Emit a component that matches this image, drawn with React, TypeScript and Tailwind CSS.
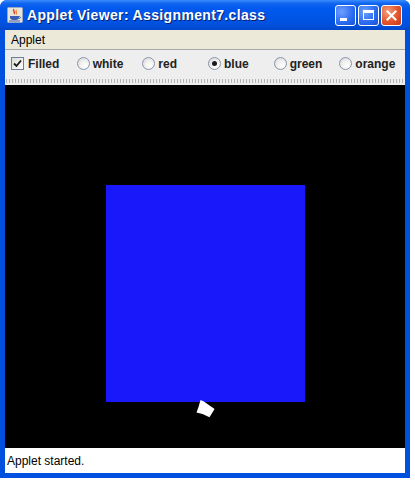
import React from "react";

function JavaIcon() {
  return (
    <svg width="16" height="16" viewBox="0 0 16 16">
      <rect x="0.5" y="0.5" width="15" height="15" rx="1" fill="#e8e4dc" stroke="#9aa7c0" />
      <path d="M7 2 C5 4 9 5 7 7" stroke="#e0401a" strokeWidth="1.4" fill="none" />
      <path d="M9.5 3 C8 4.5 10.5 5.5 9 7.5" stroke="#f08020" strokeWidth="1.2" fill="none" />
      <path d="M3 9 H12 V10.5 C12 12.5 10 13 7.5 13 C5 13 3 12.5 3 10.5 Z" fill="#3a5fb0" />
      <path d="M12 9.5 C14 9.5 14 11.5 12 11.5" stroke="#3a5fb0" strokeWidth="1" fill="none" />
      <rect x="2" y="13.5" width="11" height="1" fill="#3a5fb0" />
    </svg>
  );
}

function Radio({ checked }: { checked?: boolean }) {
  return (
    <span className="relative inline-flex h-[13px] w-[13px] items-center justify-center rounded-full border border-[#8a96ac] bg-[radial-gradient(circle_at_65%_70%,#ffffff_0%,#f0f0ee_45%,#cfd3da_100%)]">
      {checked && <span className="h-[5px] w-[5px] rounded-full bg-[#1a1a1a]" />}
    </span>
  );
}

function Option({ label, checked }: { label: string; checked?: boolean }) {
  return (
    <div className="flex w-[66px] items-center gap-[3px]">
      <Radio checked={checked} />
      <span className="text-[12px] font-bold text-[#222]">{label}</span>
    </div>
  );
}

export default function App() {
  return (
    <div
      className="h-[487px] w-[415px] bg-white"
      style={{ fontFamily: '"Liberation Sans", Arial, sans-serif' }}
    >
      <div className="flex h-[478px] w-[410px] flex-col overflow-hidden rounded-t-[7px] bg-[#0050df]">
        {/* Title bar */}
        <div className="flex h-[30px] shrink-0 items-center bg-[linear-gradient(to_bottom,#3b8dff_0%,#1064ee_12%,#0058ee_30%,#0055e6_60%,#0050dc_85%,#0046c8_100%)] pl-[7px] pr-[8px]">
          <JavaIcon />
          <span className="ml-[4px] text-[14px] font-bold tracking-[0.35px] text-white [text-shadow:1px_1px_0_#0a1f6a]">
            Applet Viewer: Assignment7.class
          </span>
          <div className="ml-auto flex gap-[2px]">
            <div className="flex h-[21px] w-[21px] items-end rounded-[3px] border border-white bg-[radial-gradient(circle_at_30%_30%,#6fa0ff_0%,#2a6bf0_60%,#1a50d8_100%)] pb-[4px] pl-[4px]">
              <div className="h-[3px] w-[7px] bg-white" />
            </div>
            <div className="flex h-[21px] w-[21px] items-center justify-center rounded-[3px] border border-white bg-[radial-gradient(circle_at_30%_30%,#6fa0ff_0%,#2a6bf0_60%,#1a50d8_100%)]">
              <div className="h-[10px] w-[11px] border border-t-[3px] border-white" />
            </div>
            <div className="flex h-[21px] w-[21px] items-center justify-center rounded-[3px] border border-white bg-[radial-gradient(circle_at_30%_30%,#f3a07e_0%,#e2552c_55%,#c6381a_100%)]">
              <svg width="11" height="11" viewBox="0 0 11 11">
                <path d="M1.5 1.5 L9.5 9.5 M9.5 1.5 L1.5 9.5" stroke="white" strokeWidth="2" strokeLinecap="square" />
              </svg>
            </div>
          </div>
        </div>

        {/* Body */}
        <div className="flex flex-1 flex-col px-[5px] pb-[5px]">
          {/* Menu bar */}
          <div className="flex h-[20px] shrink-0 items-center border-b border-[#a9a9a9] bg-[#ece9d8] pl-[6px] text-[12px] text-black">
            Applet
          </div>
          {/* Toolbar */}
          <div className="flex h-[27px] shrink-0 items-center bg-[#eeeeee] pl-[6px]">
            <div className="flex w-[66px] items-center gap-[4px]">
              <span className="flex h-[13px] w-[13px] items-center justify-center border border-[#6e7f98] bg-[linear-gradient(135deg,#dcdcd6,#ffffff)]">
                <svg width="9" height="9" viewBox="0 0 9 9">
                  <path d="M1 4.5 L3.5 7 L8 1.5" stroke="#1a1a1a" strokeWidth="1.8" fill="none" />
                </svg>
              </span>
              <span className="text-[12px] font-bold text-[#222]">Filled</span>
            </div>
            <Option label="white" />
            <Option label="red" />
            <Option label="blue" checked />
            <Option label="green" />
            <Option label="orange" />
          </div>
          {/* Dotted separator */}
          <div className="flex h-[8px] shrink-0 items-center bg-[#eeeeee]">
            <div className="h-[4px] w-full bg-[radial-gradient(circle,#b4b4b4_0.5px,transparent_0.8px)] bg-[length:3px_2px]" />
          </div>
          {/* Canvas */}
          <div className="h-[363px] shrink-0 bg-black">
            <svg width="400" height="363" viewBox="0 0 400 363">
              <rect x="101" y="100" width="199" height="217" fill="#1818fb" />
              <polygon
                points="195.5,315 198.5,316.2 209.6,323.9 204.5,332.3 197.5,329 191.5,327.5 193.5,322"
                fill="#ffffff"
              />
            </svg>
          </div>
          {/* Status bar */}
          <div className="flex flex-1 items-center bg-white pl-[2px] text-[12px] text-black">
            Applet started.
          </div>
        </div>
      </div>
    </div>
  );
}
